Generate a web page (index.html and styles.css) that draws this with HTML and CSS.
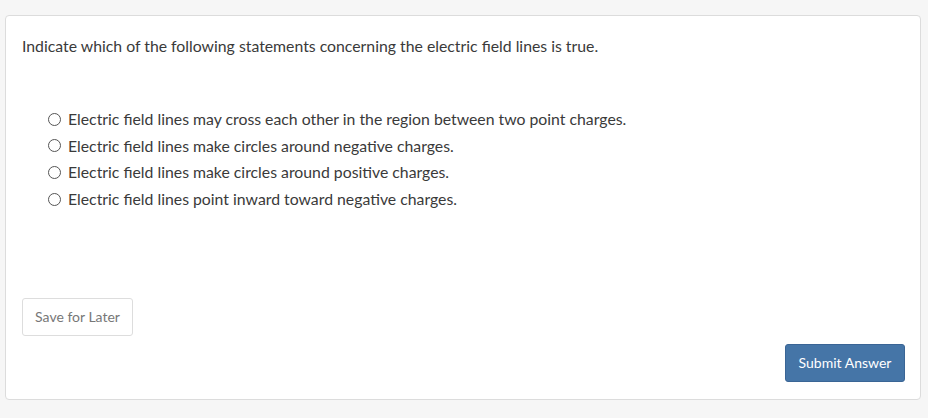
FILE: index.html
```html
<!DOCTYPE html>
<html>
<head>
<meta charset="utf-8">
<link rel="stylesheet" href="styles.css">
</head>
<body>
<div class="card">
  <p class="question">Indicate which of the following statements concerning the electric field lines is true.</p>
  <ul class="options">
    <li><label><span class="radio"></span>Electric field lines may cross each other in the region between two point charges.</label></li>
    <li><label><span class="radio"></span>Electric field lines make circles around negative charges.</label></li>
    <li><label><span class="radio"></span>Electric field lines make circles around positive charges.</label></li>
    <li><label><span class="radio"></span>Electric field lines point inward toward negative charges.</label></li>
  </ul>
  <div class="save-row"><button class="btn-save">Save for Later</button></div>
  <div class="submit-row"><button class="btn-submit">Submit Answer</button></div>
</div>
</body>
</html>
```
FILE: styles.css
```css
html, body {
  margin: 0;
  padding: 0;
  background: #f6f6f6;
}
body {
  padding: 15px 7px 19px 5px;
  font-family: Lato, "Liberation Sans", sans-serif;
  color: #3a3a3a;
}
.card {
  background: #fff;
  border: 1px solid #dcdcdc;
  border-radius: 4px;
  padding: 19px 15px 17px 16px;
  box-sizing: border-box;
  height: 385px;
  display: flex;
  flex-direction: column;
}
.question {
  margin: 0;
  font-size: 15.8px;
  line-height: 21px;
}
.options {
  list-style: none;
  margin: 50px 0 0 26px;
  padding: 0;
  font-size: 15.8px;
}
.options li {
  height: 26.67px;
  line-height: 26.67px;
}
.options label {
  display: flex;
  align-items: center;
}
.radio {
  width: 11px;
  height: 11px;
  border: 1px solid #555;
  border-radius: 50%;
  margin-right: 7px;
  flex: none;
}
.save-row {
  margin-top: 85px;
}
.btn-save {
  font-family: Lato, "Liberation Sans", sans-serif;
  font-size: 14px;
  color: #777;
  background: #fff;
  border: 1px solid #ddd;
  border-radius: 3px;
  width: 111px;
  height: 38px;
  padding: 0;
}
.submit-row {
  margin-top: 8px;
  display: flex;
  justify-content: flex-end;
}
.btn-submit {
  font-family: Lato, "Liberation Sans", sans-serif;
  font-size: 14px;
  color: #fff;
  background: #4575a7;
  border: 1px solid #3a6595;
  border-radius: 3px;
  width: 120px;
  height: 38px;
  padding: 0;
}
```
